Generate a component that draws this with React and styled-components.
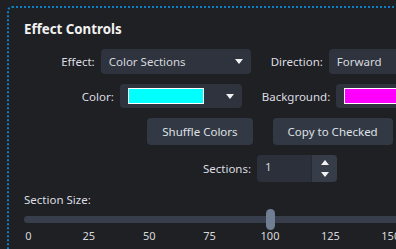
import React from "react";
import styled, { createGlobalStyle } from "styled-components";

const GlobalStyle = createGlobalStyle`
  html, body {
    margin: 0;
    background: #1f2024;
    overflow: hidden;
  }
  body {
    font-family: "Noto Sans", "Open Sans", sans-serif;
    font-size: 11.5px;
    color: #dcdde0;
  }
`;

const Panel = styled.section`
  margin: 6px 0 0 7px;
  width: 492px;
  padding: 12px 15px 20px;
  border: 2px dotted #0f80c8;
  border-radius: 5px;
`;

const Title = styled.h3`
  margin: 0 0 10px;
  font-size: 13.3px;
  line-height: 19px;
  font-weight: 700;
  color: #f2f2f2;
`;

const Rows = styled.div`
  display: flex;
  flex-direction: column;
  gap: 10px;
`;

const Row = styled.div`
  display: flex;
  justify-content: center;
  align-items: center;
  gap: 20px;
`;

const Field = styled.label`
  display: flex;
  align-items: center;
  gap: 6px;
  white-space: nowrap;
`;

const Select = styled.div`
  display: flex;
  align-items: center;
  justify-content: space-between;
  box-sizing: border-box;
  width: ${(p) => p.$width}px;
  height: ${(p) => p.$height}px;
  padding: 0 8px;
  background: #2e333e;
  border-radius: 4px;
  color: #d6d9de;
`;

const Swatch = styled.span`
  width: 74px;
  height: 14px;
  border: 1px solid #ffffff;
  background: ${(p) => p.$color};
`;

const Button = styled.button`
  height: 27px;
  padding: 0 15px;
  border: none;
  border-radius: 4px;
  background: #323844;
  color: #dfe1e4;
  font: inherit;
`;

const Spin = styled.div`
  display: flex;
  width: 80px;
  height: 27px;
  border-radius: 4px;
  overflow: hidden;
  background: #2b303b;
`;

const SpinValue = styled.span`
  flex: 1;
  padding: 4px 8px 0;
  color: #d6d9de;
`;

const SpinButtons = styled.div`
  width: 25px;
  display: flex;
  flex-direction: column;
  align-items: center;
  justify-content: center;
  gap: 7px;
  background: #363c48;
  border-left: 1px solid #262a33;
`;

const SizeLabel = styled.div`
  margin-top: 10px;
  line-height: 16px;
`;

const Slider = styled.div`
  position: relative;
  height: 21px;
  margin-top: 1px;
  display: flex;
  align-items: center;
`;

const Track = styled.div`
  flex: 1;
  height: 7px;
  border-radius: 4px;
  background: #383e4b;
`;

const Thumb = styled.div`
  position: absolute;
  top: 0;
  width: 9px;
  height: 21px;
  border-radius: 5px;
  background: #6f7e93;
`;

const Ticks = styled.div`
  display: flex;
  justify-content: space-between;
  padding: 0 4.5px;
  margin-top: -2px;
  line-height: 16px;
  font-size: 11px;
  color: #d8d9dc;
`;

const Tick = styled.span`
  width: 0;
  display: flex;
  justify-content: center;
`;

function Caret({ up }) {
  return (
    <svg width="8" height="5" viewBox="0 0 8 5">
      <polygon points={up ? "4,0 8,5 0,5" : "0,0 8,0 4,5"} fill="#f2f2f2" />
    </svg>
  );
}

const ticks = [0, 25, 50, 75, 100, 125, 150, 175, 200];

export default function App() {
  const value = 100;
  const pct = value / 200;
  return (
    <>
      <GlobalStyle />
      <Panel>
        <Title>Effect Controls</Title>
        <Rows>
          <Row>
            <Field>
              Effect:
              <Select $width={150} $height={25}>
                Color Sections
                <Caret />
              </Select>
            </Field>
            <Field>
              Direction:
              <Select $width={150} $height={25}>
                Forward
                <Caret />
              </Select>
            </Field>
          </Row>
          <Row>
            <Field>
              Color:
              <Select $width={122} $height={24}>
                <Swatch $color="#00ffff" />
                <Caret />
              </Select>
            </Field>
            <Field>
              Background:
              <Select $width={122} $height={24}>
                <Swatch $color="#ff00ff" />
                <Caret />
              </Select>
            </Field>
          </Row>
          <Row>
            <Button>Shuffle Colors</Button>
            <Button>Copy to Checked</Button>
          </Row>
          <Row>
            <Field>
              Sections:
              <Spin>
                <SpinValue>1</SpinValue>
                <SpinButtons>
                  <Caret up />
                  <Caret />
                </SpinButtons>
              </Spin>
            </Field>
          </Row>
        </Rows>
        <SizeLabel>Section Size:</SizeLabel>
        <Slider>
          <Track />
          <Thumb style={{ left: `calc(${pct} * (100% - 9px))` }} />
        </Slider>
        <Ticks>
          {ticks.map((t) => (
            <Tick key={t}>{t}</Tick>
          ))}
        </Ticks>
      </Panel>
    </>
  );
}
